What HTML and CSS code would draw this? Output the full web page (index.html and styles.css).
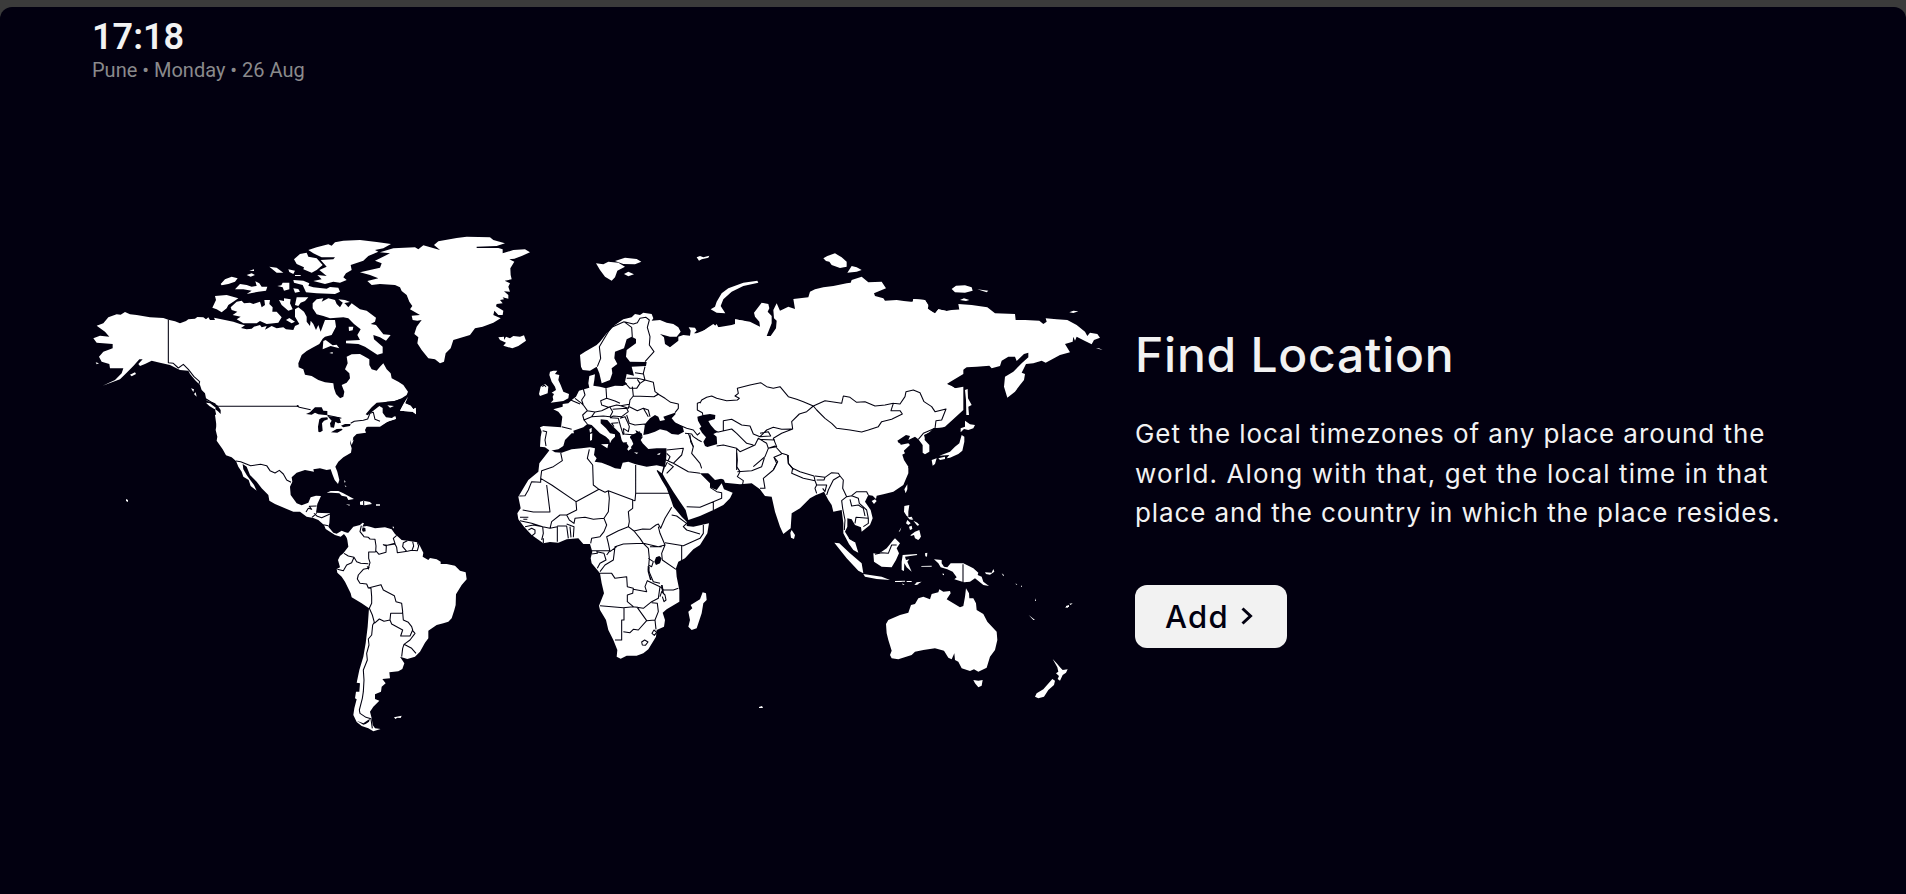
FILE: index.html
```html
<!DOCTYPE html>
<html lang="en">
<head>
<meta charset="utf-8">
<title>World Clock</title>
<link rel="stylesheet" href="styles.css">
</head>
<body>
<div class="app">
  <header class="clock">
    <div class="clock-time">17:18</div>
    <div class="clock-info">Pune • Monday • 26 Aug</div>
  </header>
  <main class="hero">
    <svg class="map" viewBox="93 235 1011 499" role="img" aria-label="World map">
      <!-- North America, west -->
      <g transform="translate(80 220) scale(.33333)">
        <path class="land" d="M50,317L70,310 85,292 110,283 122,284 135,276 150,283 170,285 210,292 250,294 265,299 285,304 300,310 318,303 325,298 345,296 352,291 370,292 378,298 385,292 390,300 405,300 402,293 435,300 460,305 480,312 495,316 483,324 500,328 515,326 522,320 540,315 545,322 560,318 555,329 575,318 590,325 610,322 618,328 640,330 645,318 658,312 645,290 645,268 655,262 672,275 680,290 680,305 690,318 692,302 700,312 708,330 715,315 722,335 735,300 765,300 768,320 755,345 735,350 728,356 718,372 700,382 680,393 665,405 655,430 656,442 670,448 675,464 695,468 715,480 735,487 760,490 762,505 768,522 780,535 780,620 410,620 405,585 420,578 422,568 410,552 395,545 378,535 375,520 365,510 360,495 345,480 330,462 325,452 300,450 270,435 240,428 215,422 195,432 180,438 175,432 188,418 178,418 160,438 140,458 120,478 68,497 105,480 125,460 130,445 90,445 88,432 65,425 57,410 70,395 98,385 98,372 50,368 40,355 60,347 88,350 75,335Z"/>
        <path class="land" d="M397,263L408,240 405,228 440,225 475,235 460,245 445,255 440,265 425,277 410,268ZM422,192L435,178 455,170 473,175 465,185 445,192 425,196ZM465,208L480,192 500,195 515,200 530,198 526,184 538,190 545,200 562,200 558,212 535,215 500,222 515,212 490,208ZM500,165L515,160 525,165 512,170ZM508,152L522,148 522,153ZM568,140L590,143 610,158 590,158 580,150ZM452,262L470,245 485,242 492,250 510,248 520,252 540,245 545,262 555,255 553,240 570,240 568,252 578,262 577,275 590,275 605,292 595,308 560,312 540,303 530,310 490,310 470,298 482,290 458,285 472,275 455,270ZM592,198L604,196 608,188 628,188 628,208 612,212 608,202ZM625,148L645,152 640,162 628,156ZM597,240L612,243 612,235 632,238 630,250 638,268 625,272 605,255ZM645,255L650,232 685,232 675,243 662,248 655,258ZM640,205L655,207 660,215 645,218ZM618,300L628,294 645,305 635,310ZM645,165H662V168H645ZM150,464L165,457 168,462 155,469ZM333,505L342,508 340,516ZM347,517L350,530 342,522ZM378,540L395,548 420,568 422,580 405,565ZM47,427L57,430 50,433Z"/>
      </g>
      <!-- North America, east, and Greenland -->
      <g transform="translate(280 220) scale(.33333)">
        <path class="land" d="M175,530L180,535 190,530 193,515 185,495 200,488 210,475 208,460 195,448 203,430 200,410 215,403 240,402 255,410 268,418 268,435 275,448 290,452 300,440 310,430 320,448 332,460 335,475 355,485 370,495 384,515 380,525 365,535 345,543 320,545 315,565 345,590 300,620 160,620Z"/>
        <path class="land" d="M42,118L60,102 80,98 85,110 110,115 128,135 110,150 95,158 70,148 72,142 50,132ZM85,90L110,82 145,73 155,77 165,67 190,62 240,60 290,66 333,72 310,85 285,90 295,95 265,108 250,122 212,135 215,150 198,160 190,172 200,180 180,188 160,185 135,192 100,183 125,178 112,165 140,168 118,150 140,140 122,120 160,118 165,112 125,112 100,100ZM40,180L70,182 88,190 85,197 100,202 140,206 150,201 175,203 180,215 165,222 110,220 78,217 68,195 42,188ZM98,250L110,238 130,235 125,245 145,235 165,240 170,252 180,262 190,245 205,262 215,250 240,268 260,272 288,293 285,305 272,312 288,315 300,330 310,343 332,345 318,362 300,352 280,345 282,358 308,380 308,400 292,404 270,390 255,380 235,372 198,370 198,362 240,360 232,345 242,328 222,312 205,295 190,292 150,295 130,288 110,283 98,265ZM175,238L195,240 210,246 190,250ZM206,320L220,320 218,331 207,333ZM130,363L137,360 158,376 170,374 178,385 152,378 128,388ZM148,399L158,396 158,401Z"/>
        <path class="land" d="M240,157L280,148 300,143 305,130 285,122 330,100 300,97 340,85 405,82 415,88 430,76 480,90 462,75 475,64 530,54 560,50 630,52 640,60 675,70 650,78 590,80 590,84 655,84 668,88 668,100 700,90 735,88 750,97 725,108 703,116 688,118 703,125 691,145 692,165 695,178 674,182 690,190 685,200 690,215 672,214 685,225 685,236 668,232 672,238 660,240 668,250 650,252 648,259 670,272 668,285 655,285 643,272 640,285 662,295 640,308 608,320 585,325 570,345 520,360 512,385 497,400 492,425 480,430 465,418 445,415 425,390 412,370 415,352 403,342 410,320 425,300 412,302 398,300 395,287 420,285 390,268 397,258 388,245 380,225 365,213 360,202 345,195 300,192 275,195 262,183 295,175 270,165ZM655,352L672,350 672,360 678,350 690,355 700,348 720,350 732,346 738,362 715,378 697,385 670,377 678,368 660,360ZM384,530L375,550 392,557 400,568 407,563 408,583 398,575 360,572 372,550Z"/>
      </g>
      <!-- United States, Mexico, Central America -->
      <g transform="translate(180 380) scale(.33333)">
        <path class="land" d="M108,60H570L557,103 578,88 600,80 612,82 608,95 618,108 640,112 648,116 620,125 600,137 598,125 585,128 560,140 555,150 558,158 530,162 520,172 518,183 522,178 515,195 510,180 511,192 515,205 513,218 490,232 475,245 466,260 472,275 478,300 474,312 464,300 458,285 452,268 440,270 420,265 400,268 402,275 375,270 350,278 335,292 337,305 330,320 332,345 350,370 365,376 385,368 392,352 408,347 423,348 412,372 408,398 425,399 450,400 448,430 445,440 460,458 470,461 485,452 500,458 505,475 502,475 492,462 482,470 465,465 437,447 432,435 415,420 400,414 380,410 360,395 340,395 315,385 285,372 268,362 265,345 245,325 230,305 210,285 200,260 188,252 190,268 200,285 213,303 222,315 230,332 212,318 206,300 190,290 185,275 175,260 168,243 155,232 138,226 128,208 110,182 112,170 107,150 112,120 105,88Z"/>
        <path class="sea" d="M378,102L390,97 405,82 425,82 430,92 442,93 442,106 415,103 405,98 395,104ZM415,155L414,140 418,118 425,113 442,112 444,118 432,122 426,130 428,152 420,157ZM442,108L478,112 483,128 474,130 466,125 462,143 452,142 450,130 455,122ZM453,157L470,147 485,146 488,149 472,158ZM483,137L495,132 512,132 510,138 490,142Z"/>
        <path class="sea" d="M78,62L95,66 112,76 122,90 122,102 114,94 106,88 95,76 80,66Z"/>
        <path class="land" d="M78,68L90,70 108,84 104,88 88,78Z"/>
        <path class="sea" d="M557,103L575,82 590,68 640,64 675,53 662,85 650,88 647,106 636,114 618,112 608,98 608,84 598,78 580,92 563,106Z"/>
        <path class="land" d="M684,50L675,70 692,77 700,88 707,83 708,103 698,95 660,92 672,70ZM622,76L642,78 630,83ZM602,128L628,120 647,109 648,117 620,126 600,137Z"/>
        <path class="land" d="M440,338L452,333 475,333 490,340 522,357 505,360 500,350 485,347 478,340 455,338ZM540,365L550,362 570,366 576,372 555,376 540,374ZM498,373L510,374 508,377ZM588,373H600V377H588ZM492,300L497,305 494,308ZM494,315L500,320 496,320Z"/>
      </g>
      <!-- South America -->
      <g transform="translate(320 510) scale(.33333)">
        <path class="land" d="M76,68L85,68 100,50 120,45 128,38 132,40 127,50 140,48 150,50 165,55 195,52 215,58 225,72 245,90 262,92 292,97 300,108 310,128 308,140 325,150 330,144 350,148 362,155 362,162 380,162 405,167 420,182 437,187 440,208 425,225 408,253 407,285 403,300 395,325 385,335 370,340 350,345 325,362 325,385 315,398 300,425 285,440 262,447 240,440 253,460 247,477 235,484 208,487 210,505 187,507 197,520 185,530 183,545 165,553 165,567 178,572 160,590 150,605 155,625 158,645 165,655 182,657 160,664 145,655 125,648 110,636 100,615 103,595 110,568 105,565 108,545 118,545 120,520 110,518 118,480 130,440 137,400 143,350 147,295 125,280 95,262 92,250 75,215 65,200 52,188 50,177 60,172 54,150 60,138 70,130 85,110 82,90Z"/>
        <path class="line" d="M124,47L120,65 132,80 145,82 150,87 165,88 168,108 167,126M202,106L225,100 220,85 230,76M167,122L177,133 198,127 199,108 190,104 202,106 225,102 230,112 232,128 262,124 276,121 292,122 296,108 292,97M262,92L250,98 248,110 260,124M278,95L281,108 276,121M72,130L85,138 102,142 95,158 80,165 70,182 52,178M102,142L110,155 122,160 145,161M167,126H146V145L150,158 145,175 130,178 115,195 112,207 120,220 140,222 145,234 153,235 155,260 155,280 148,295 157,315 163,337 158,345 155,375 145,387 147,405 140,430 142,450 130,480 132,510 130,545 127,565 118,600 120,610 138,622 155,627M145,234L183,224 190,240 223,257 228,275 245,280 248,305 247,310 212,310 210,330 192,334 178,327 163,340M248,308L250,330 265,337 275,350 278,360 270,378 242,378 248,360 215,342 210,330M278,362L285,370 270,390 252,403 248,415 245,440M252,403L275,415 288,430M153,627L157,655"/>
        <path class="sea" d="M128,52L136,54 137,64 129,65 126,60ZM140,168L149,172 145,180ZM110,632L130,640 141,632 150,626 147,635 137,642 130,644Z"/>
        <path class="land" d="M222,622L245,617 242,624 232,623 226,627ZM217,50L222,50 221,56Z"/>
      </g>
      <!-- Europe -->
      <g transform="translate(500 240) scale(.33333)">
        <path class="land" d="M240,345L255,335 290,315 300,305 320,280 345,255 370,238 395,232 405,222 420,225 430,218 455,222 460,235 455,242 480,240 500,248 520,252 535,262 542,275 530,290 510,290 480,282 492,292 495,312 510,322 535,302 535,290 550,285 570,287 572,272 566,262 585,263 590,272 582,280 600,280 625,262 640,252 652,262 680,262 705,255 705,238 730,242 790,266V670H500V625H470L445,627 428,610 422,600 428,592 420,585 410,578 395,585 390,590 390,602 385,612 395,625 385,632 375,618 365,600 360,580 340,560 322,540 302,538 302,550 318,565 330,580 345,583 345,590 335,600 330,610 328,600 318,590 300,580 285,565 275,555 262,552 250,562 220,572 222,580 215,580 195,600 190,618 175,628 150,632 135,622 120,620 122,590 125,575 120,562 130,558 183,562 187,530 175,515 160,508 188,500 188,492 205,490 218,478 228,470 237,452 255,447 268,443 265,430 268,408 285,403 283,420 280,437 300,440 318,445 345,437 368,438 382,432 375,425 380,402 402,407 395,380 438,378 440,366 390,365 378,350 380,330 408,310 408,297 395,290 380,298 372,325 345,335 343,355 352,372 335,385 337,400 330,420 305,430 298,400 290,380 270,392 248,390 243,380Z"/>
        <path class="land" d="M160,392L172,392 165,402 178,405 175,420 182,435 190,455 207,462 205,475 190,483 152,488 160,480 158,470 162,462 155,458 168,450 165,440 155,425 148,405 150,395ZM117,462L122,440 135,432 145,440 143,460 120,468ZM288,70L310,73 325,65 355,68 375,80 352,92 345,112 335,122 315,110 300,90ZM345,63L375,53 410,57 424,65 405,73 370,72ZM372,102L385,95 402,103 385,109ZM590,52L600,48 610,52 628,47 625,53 605,58 597,62ZM268,568L275,563 275,575 270,578ZM270,582L277,580 276,600 270,602ZM303,613L325,612 322,625ZM402,637L415,638 410,642ZM470,643L482,638 478,645Z"/>
        <path class="sea" d="M288,420L298,425 302,432 292,434ZM432,572L435,552 450,535 465,525 475,530 480,543 495,540 490,530 505,525 525,518 527,522 515,535 525,547 548,560 552,575 535,584 515,582 500,572 480,568 465,575 445,582 430,585ZM406,570L425,580 428,590 412,585ZM345,610L395,605 380,630 350,625Z"/>
        <path class="land" d="M388,590L395,600 400,612 390,625 380,610Z"/>
      </g>
      <!-- Africa and Arabia -->
      <g transform="translate(500 430) scale(.33333)">
        <path class="land" d="M145,65L150,58 165,67 185,68 215,58 245,55 270,52 285,55 282,75 290,85 284,95 305,98 330,108 345,115 362,117 368,98 385,95 407,103 440,110 470,106 490,110 485,130 472,120 470,122 485,150 500,175 515,215 520,230 545,260 560,275 560,288 580,290 627,280 622,310 600,345 580,358 555,385 535,395 528,415 530,440 538,480 538,515 500,538 488,548 495,570 492,590 470,600 468,620 445,658 430,670 410,677 380,677 362,686 350,680 352,660 340,630 325,600 318,570 300,540 297,527 312,490 305,460 300,430 275,400 272,385 277,365 270,342 250,342 235,325 200,328 175,338 150,336 130,340 95,315 72,290 55,268 52,250 62,235 55,200 70,175 85,150 115,125 118,100ZM570,570L565,545 577,535 572,525 600,508 608,487 618,490 620,510 610,520 605,550 590,595 575,600 565,590Z"/>
        <path class="land" d="M500,30H730V160L690,157 650,140 625,125 605,115 600,130 630,160 630,172 650,180 665,160 672,178 698,188 690,205 670,225 640,240 600,258 565,270 557,240 540,215 520,185 495,145 488,132 495,110 500,75Z"/>
        <path class="sea" d="M468,382L478,378 485,385 480,400 468,405 463,395ZM443,408L449,412 448,430 455,450 450,450 443,425ZM483,465L488,465 492,490 486,485Z"/>
      </g>
      <!-- Central Asia and Siberia -->
      <g transform="translate(700 230) scale(.33333)">
        <path class="land" d="M-10,310L45,288 50,282 55,292 95,285 112,280 105,268 150,275 180,290 178,275 165,260 162,248 185,218 205,222 208,235 203,245 215,258 215,280 200,318 212,318 228,295 230,272 222,265 220,240 230,220 240,242 265,230 285,237 280,207 325,202 330,185 345,178 370,172 400,168 440,160 452,158 455,150 485,140 505,157 545,155 558,175 522,190 525,198 550,205 555,212 590,210 638,217 640,207 675,210 685,228 683,238 705,250 715,238 740,243 755,240 790,238V432L740,462 755,468 765,475 790,470V540L735,590 700,595 690,605 675,615 674,630 688,645 688,665 675,673 668,668 668,645 655,628 645,620 625,630 630,618 618,615 592,632 600,645 625,640 630,645 605,668 612,690 625,710 620,730H-10V680L53,645 48,630 30,600 45,590 40,570H-10ZM370,85L382,78 405,70 425,82 440,95 440,110 420,114 395,105 388,95 378,93ZM442,128L455,108 470,112 485,120 470,125Z"/>
        <path class="land" d="M32,238L45,230 50,215 65,190 85,175 130,158 172,152 175,158 130,168 95,185 70,208 62,228 76,250 50,248Z"/>
        <path class="sea" d="M-8,560L10,555 30,552 46,555 45,567 25,573 32,585 45,600 55,605 40,612 50,620 52,650 35,656 15,648 10,635 18,622 6,608 -2,595 4,590 -6,572Z"/>
        <path class="sea" d="M672,615L695,605 680,622 690,640 676,628Z"/>
      </g>
      <!-- Far East and Japan -->
      <g transform="translate(900 240) scale(.33333)">
        <path class="land" d="M-10,185H38L40,177 75,180 85,195 82,205 105,222 115,208 140,213 178,210 175,192 215,195 262,202 285,220 345,222 347,240 375,240 418,242 430,252 440,245 437,235 470,238 502,240 530,255 555,275 562,288 570,278 592,282 600,293 582,300 575,313 555,303 530,290 525,302 520,290 518,305 495,312 510,337 480,345 437,368 425,362 400,370 378,372 365,398 375,402 372,420 360,435 345,455 322,473 312,440 315,410 340,395 365,370 385,352 385,338 372,342 350,363 345,350 325,350 305,362 300,378 275,385 268,377 230,380 200,382 175,400 140,432 165,445 180,445 188,460 182,500 160,535 130,562 105,564 75,560 -10,560ZM155,147L168,137 195,136 215,142 218,152 195,158 165,157ZM232,148L265,152 260,157ZM180,180L192,175 208,180 198,183ZM508,217L520,212 535,214 520,219ZM588,325H597L608,330ZM195,450L203,447 204,475 215,495 205,500 207,525 199,525 198,480ZM195,542L210,553 225,555 220,565 205,570 192,567 182,577 182,565 195,560ZM185,585L193,590 193,605 187,632 175,642 150,653 140,655 148,645 118,647 150,635 165,620 178,610ZM95,660L110,655 105,672 98,677ZM115,655L135,650 135,657 120,660Z"/>
      </g>
      <!-- South and Southeast Asia -->
      <g transform="translate(700 430) scale(.33333)">
        <path class="land" d="M-8,60L60,40H600L615,70 605,75 608,90 625,115 625,130 610,165 580,185 550,193 530,197 528,207 518,197 505,195 495,215 512,240 518,265 510,285 485,305 483,292 465,285 455,268 442,265 442,290 435,305 447,325 465,335 475,368 460,360 447,342 430,310 430,280 425,240 400,245 395,225 385,210 372,185 362,190 348,195 330,205 300,235 275,250 272,295 250,312 240,290 225,245 215,200 195,198 180,178 155,160 120,163 75,158 70,145 45,150 25,130 10,118 -8,115Z"/>
        <path class="land" d="M275,300L285,315 282,327 273,323 271,308ZM515,213L525,208 530,213 522,222ZM613,178L622,163 622,178 617,190ZM613,228L628,225 625,245 625,262 635,260 640,270 620,258 612,245ZM403,338L418,340 450,370 485,400 490,430 475,422 440,385ZM490,432L510,435 545,440 570,450 530,447 495,440ZM520,370L535,372 560,355 580,330 585,325 600,340 590,355 597,370 588,390 575,412 545,410 522,395ZM608,375L650,372 652,375 615,380 618,390 628,388 622,395 635,425 620,412 613,400 612,423 605,420 605,395ZM585,453H605V456H585ZM645,465L655,460 655,463ZM645,318L660,305 660,325 652,328ZM622,270L632,280 625,285 618,280Z"/>
      </g>
      <!-- Oceania -->
      <g transform="translate(820 480) scale(.33333)">
        <path class="land" d="M273,375L285,372 295,355 310,350 330,358 335,342 355,337 358,328 370,335 390,333 392,340 380,358 400,370 420,382 430,378 435,350 438,325 447,340 448,355 460,355 468,370 470,390 490,402 502,425 530,455 532,480 525,510 510,530 500,563 475,575 462,568 450,573 425,565 415,545 405,540 403,520 395,538 385,533 372,512 345,505 310,510 285,515 275,525 235,538 215,535 210,525 215,512 205,480 200,460 198,432 205,420 240,405 265,398ZM460,600L475,602 488,600 485,617 475,622 465,610ZM698,537L710,550 720,562 728,570 743,568 738,578 728,585 720,602 713,597 717,588 708,580 715,575 712,562ZM697,597L705,602 702,615 685,630 672,650 655,655 645,650 650,640 670,628ZM342,238L365,240 365,250 372,260 382,262 392,250 430,250 460,265 475,278 473,285 485,290 490,305 507,318 490,315 465,295 450,305 432,307 403,298 410,292 398,275 382,268 362,262 355,250ZM495,277L515,278 520,267 523,275 510,284 498,282ZM545,280L552,285 550,289ZM626,405L645,420 640,420ZM735,382L742,379 744,384ZM748,371L758,370 752,375ZM587,310L592,314 588,314ZM603,317H606V320H603ZM646,355L648,363 645,363ZM315,220L322,218 321,230 316,229ZM303,258L335,257 335,260H305ZM283,315L290,307 305,305 290,314ZM225,303L255,302 255,305 225,305ZM260,303H275V306H260ZM247,310L254,315 248,314ZM368,280L372,282V286L368,284ZM272,165L285,155 298,150 303,170 295,180 285,175 282,165 272,168ZM280,122L292,128 298,135 292,137ZM262,110L272,113 278,120 268,118ZM267,140L275,137 277,147 270,150ZM236,155L244,142 240,154Z"/>
      </g>
      <path class="land" d="M126,499l2,1v2l-2,-1zM759,707l3,-1 1,2h-4zM1066,606l3,-1v2h-3z"/>
      <!-- Country borders -->
      <g transform="translate(80 220) scale(.33333)">
        <path class="line" d="M265,299V428L280,430 295,444 310,433 325,448 342,470 359,485 356,495M410,559H653L658,562 692,569"/>
        <circle class="sea" cx="653" cy="558" r="3"/>
      </g>
      <g transform="translate(180 380) scale(.33333)">
        <path class="line" d="M168,243L182,245 212,257 242,253 260,257 270,272 285,279 298,271 310,282 320,300 333,307M442,106L484,115M512,130L523,124 550,121 563,117 570,100 580,97 585,118 600,124M378,396L385,385 395,388 388,379 410,378M410,400L396,412M402,400L412,409 425,413 450,402M430,434L445,437M551,363V375"/>
      </g>
      <g transform="translate(500 240) scale(.33333)">
        <path class="line" d="M292,380L302,355 298,320 310,300 325,275 335,262 372,245 395,262 397,292M372,245L400,252 412,248 420,235 438,232 448,240 442,262 450,290 448,315 462,335 435,365M435,380L430,400 435,420 412,415 380,415M405,398L430,402M378,432L390,445 410,445 420,430 412,418M420,430L435,420 460,427 465,455 475,462 462,470 400,468 397,440M318,445L320,475 302,482 305,495 325,502 350,495 362,497 388,493 390,480 400,468M320,475L345,483 360,490M362,497L385,505 388,493M250,447L255,465 245,480 250,495 262,512 285,516 305,512 330,500M225,475L245,490 250,495M212,480L240,492M262,512L248,525 252,540 275,530 285,516M252,540L262,552M275,530L310,528 330,530 338,515 330,502M338,508L380,505 385,515 365,530 340,528 330,533M388,500L412,512 430,505 445,530M430,505L445,510 450,530M380,525L388,550 405,555 435,552M330,533L355,535 362,560 370,585M360,535L375,530 382,545 388,560 385,575 370,565M355,548L335,550 342,560M370,565L372,582 405,585 420,575M435,552L440,565M462,470L475,463 495,475 512,487 535,492 535,505 525,518M185,560L215,568M128,572L140,575 135,600 138,618M127,440L133,435 138,441M530,552L560,565 580,570 592,585 600,578M555,580L575,582 580,590 595,600 605,605M570,585L572,605 580,620M609,528L607,518 592,510 592,490 600,487"/>
      </g>
      <g transform="translate(500 430) scale(.33333)">
        <path class="line" d="M182,68L187,92 160,110 125,122 122,145 155,165 228,215 297,178 280,165 278,105 262,85 268,58M122,145L122,157 95,155 85,180 75,197 58,198M140,165L150,246H100L68,240M297,178L315,187 325,182 405,212 407,190V105M407,190H508M325,182L328,205 325,245 312,265M228,215L230,240 200,255 180,255 155,275 150,295 128,290 95,280 60,272M200,255L208,270 222,280 225,265 255,262 280,268 312,265 320,285 312,305 300,320 275,325 272,340M398,208V235L385,245 388,275 385,290 355,302 320,320 325,340 330,365M385,290L402,303 428,297 450,298 468,285 475,282 482,295 495,265 515,232M402,303L420,325 430,340 475,350 495,345 480,310 475,290M515,255L530,258 560,280 550,290 560,300 600,312M495,338L550,347 600,325 610,310V285M545,345V395M495,345L485,370 487,390 528,418M430,340L370,342 345,350 340,390 315,405 300,425M330,365L350,350M275,362H330L320,375M275,372L292,370 290,362M290,365L312,370 318,390 300,400 292,415M300,430H335L345,445 380,440 382,470 400,475 398,490 382,495V515L400,530 370,533 300,527M400,530L430,535 455,515 475,505 480,470 442,452 435,470 440,485 400,478M455,518L472,520 475,545 465,570 440,572 410,530M372,533V570H365V630L345,630M370,605L390,608 400,598 415,600 440,572M465,570L468,598M482,470L490,480 520,480 535,475M430,340L445,355 448,385 445,420 460,455 480,460M487,500L492,515 498,510 495,495 485,485 480,500M450,350L485,350M445,385L460,395 455,410 445,405M60,262H85M70,268H82M75,290L100,285 128,290 130,310 125,330M85,300L95,295 105,300 105,310 95,318M130,340V325M150,295L172,290V335M172,288H200L205,325M210,290L213,322M200,282L222,290 220,322M495,110L510,80 500,70M498,90L520,100 545,75 550,55 500,60M520,100L565,125 590,128 600,130M565,10L580,50 575,70 600,100 605,115M500,130L520,110 505,100M560,230L600,232 640,215M640,215L640,240M630,172L650,185 665,188 665,205 640,215"/>
        <path class="line" d="M456,610L462,600 470,607 463,616ZM425,636L434,630 444,636 436,646 427,645Z"/>
      </g>
      <g transform="translate(700 230) scale(.33333)">
        <path class="line" d="M0,520L5,510 20,502 35,498 50,505 80,512 112,510 118,505 105,498 115,490 112,475 150,465 182,458 200,470 220,475 240,470 265,500 290,508 310,515 340,528 350,540 375,565 395,580 410,595 450,600 485,606 505,600 535,590 545,575 575,568 607,552 600,542 573,542 580,520 555,525 525,528 495,515 470,517 450,502 430,498 425,520 375,512 340,528M580,520L600,522 615,500 618,485 640,480 660,488 672,515 695,530 705,545 738,537 725,570 708,572 705,595 670,610 655,628M340,528L320,545 298,552 275,575 278,597 245,610 220,625 230,650 205,655 200,640 175,625 165,645 120,665 110,655 70,645 50,648M70,605V572L95,568 125,585 150,588 160,612 180,620 200,600 220,592 245,598 275,597M52,607L95,597 110,610 140,640 160,645M180,610L205,605 212,618 180,620M180,628L225,630M205,655L225,648 245,670 262,675 265,700 280,718M110,655V720M205,655L195,680 160,710M245,672L222,682 230,700 220,720"/>
      </g>
      <g transform="translate(700 430) scale(.33333)">
        <path class="line" d="M110,68L112,90 110,110 120,125 112,140 130,152 128,162M112,125L155,122 185,110 193,84M220,120L190,145 195,175 180,175M222,82L233,95 220,120M265,75L265,100 278,115 275,130 310,145 345,152 342,138 300,125 278,115M345,138L375,142 372,150 350,150M375,142L395,128 415,130 420,138 400,150 385,180 380,195M345,152L350,165 345,175 350,190M350,165L380,165 375,185 368,175M420,138L430,150 428,175 440,200 425,212 428,235 435,270 433,300M440,200L455,197 470,185 500,185 505,195M455,197L475,205 478,220 500,240 505,265 505,280 490,290M495,258L490,235 475,225 455,228 450,208M505,265L468,262 465,280M447,325L465,335M525,373L545,368 565,370 575,345 590,345"/>
      </g>
      <g transform="translate(820 480) scale(.33333)">
        <path class="line" d="M429,253V307"/>
      </g>
    </svg>
    <section class="intro">
      <h1 class="intro-title">Find Location</h1>
      <p class="intro-text"><span class="row row-a">Get the local timezones of any place around the</span> <span class="row row-b">world. Along with that, get the local time in that</span> <span class="row row-c">place and the country in which the place resides.</span></p>
      <button class="add" type="button"><span>Add</span><svg class="chevron" viewBox="0 0 14 18"><path d="M2.5 1.5 10.5 9 2.5 16.5"/></svg></button>
    </section>
  </main>
</div>
</body>
</html>
```
FILE: styles.css
```css
* { box-sizing: border-box; }
body {
  margin: 0;
  height: 894px;
  padding-top: 7px;
  overflow: hidden;
  background: #3b3b3b;
  font-family: Inter, sans-serif;
}
.app {
  height: 887px;
  padding: 10px 93px 0;
  border-radius: 12px 12px 0 0;
  background: #020010;
  color: #f2f2f2;
}
.clock { height: 74px; margin-left: -1px; font-family: Roboto, sans-serif; }
.clock-time { font-size: 36px; font-weight: 600; line-height: 40px; }
.clock-info { margin-top: 1px; font-size: 20px; line-height: 24px; color: #8a8a8c; }
.hero { display: flex; gap: 31px; padding-top: 144px; }
.map { flex: none; width: 1011px; height: 499px; }
.land { fill: #fff; }
.sea { fill: #020010; }
.line { fill: none; stroke: #020010; stroke-width: 3.2; stroke-linejoin: round; }
.intro { flex: none; width: 660px; padding-top: 84px; }
.intro-title {
  margin: 0;
  font-size: 48px;
  font-weight: 500;
  line-height: 72px;
  letter-spacing: .75px;
  white-space: nowrap;
}
.intro-text { margin: 23px 0 0; font-size: 26px; line-height: 39.5px; white-space: nowrap; }
.row { display: block; }
.row-a { letter-spacing: .94px; }
.row-b { letter-spacing: 1.13px; }
.row-c { letter-spacing: .88px; }
.add {
  display: flex;
  align-items: center;
  gap: 11px;
  width: 152px;
  height: 63px;
  margin-top: 52px;
  padding: 0 0 0 30px;
  border: 0;
  border-radius: 12px;
  background: #f2f2f2;
  color: #020010;
  font: 500 31px Inter, sans-serif;
  letter-spacing: 1.3px;
}
.chevron { width: 14px; height: 18px; fill: none; stroke: #020010; stroke-width: 3; }
```
